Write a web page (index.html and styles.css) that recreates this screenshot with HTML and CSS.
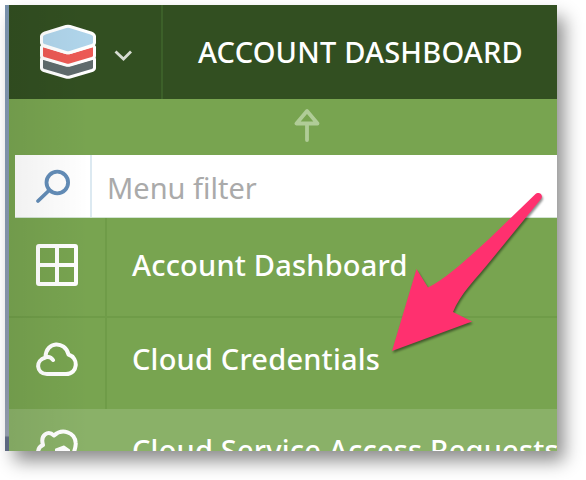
FILE: index.html
```
<!DOCTYPE html>
<html lang="en">
<head>
<meta charset="utf-8">
<title>Account Dashboard</title>
<link rel="stylesheet" href="styles.css">
</head>
<body>
<div class="window">
  <div class="app">
    <header class="header">
      <div class="brand">
        <svg class="logo" width="58" height="56" viewBox="0 0 58 56" stroke="#fff" stroke-width="3" stroke-linejoin="round">
          <path fill="#5f6b6c" d="M2.500 35Q3 33.500 5 34L27 40.500Q29 41 31 40.500L53 34Q55 33.500 55.500 35V44Q55.500 45.500 53 46.500L31 53Q29 53.600 27 53L5 46.500Q2.500 45.500 2.500 44Z"/>
          <path fill="#ec5a55" d="M2.500 23Q3 21.500 5 22L27 28.500Q29 29 31 28.500L53 22Q55 21.500 55.500 23V32Q55.500 33.500 53 34.500L31 41Q29 41.600 27 41L5 34.500Q2.500 33.500 2.500 32Z"/>
          <path fill="#b0d5eb" d="M27 2.500Q29 1.900 31 2.500L52 9Q55.500 10.500 55.500 12.500V18.500Q55.500 20.500 53 21.500L31 28.500Q29 29.100 27 28.500L5 21.500Q2.500 20.500 2.500 18.500V12.500Q2.500 10.500 6 9Z"/>
        </svg>
        <svg class="chevron" width="18" height="12" viewBox="0 0 18 12"><path d="M1.500 1.500 9.500 9 17 1.500" fill="none" stroke="#d6dcd2" stroke-width="2.800"/></svg>
      </div>
      <h1 class="title"><span>ACCOUNT DASHBOARD</span></h1>
    </header>
    <div class="scroll-up">
      <svg width="26" height="35" viewBox="0 0 26 35" fill="none" stroke="#b0cc97" stroke-width="3.800" stroke-linejoin="round" stroke-linecap="round"><path d="M13 3 2.500 15.500H23.500ZM13 16V32"/></svg>
    </div>
    <div class="filter">
      <div class="filter-icon">
        <svg width="36" height="36" viewBox="0 0 36 36" fill="none" stroke="#638db8" stroke-width="3.800" stroke-linecap="round"><circle cx="22.300" cy="13.500" r="10.800"/><path d="M14 21.500 3 32"/></svg>
      </div>
      <div class="filter-text">Menu filter</div>
    </div>
    <nav class="menu">
      <div class="item first">
        <div class="icon"><svg width="42" height="42" viewBox="0 0 42 42" fill="none" stroke="#fff" stroke-width="4"><rect x="2" y="2" width="38" height="38" rx="1"/><path d="M21 2V40M2 21H40"/></svg></div>
        <div class="label">Account Dashboard</div>
      </div>
      <div class="item second">
        <div class="icon"><svg width="42" height="34" viewBox="0 0 42 34" fill="none" stroke="#fff" stroke-width="4" stroke-linecap="round" stroke-linejoin="round"><path d="M17 18C15 15 12 14.500 9.500 15.500C-1 18 0 32 11 32H30C42 32 43 16 32.500 12.500C29-1.500 10-1 9.500 15"/></svg></div>
        <div class="label">Cloud Credentials</div>
      </div>
      <div class="item third">
        <div class="icon"><svg width="42" height="34" viewBox="0 0 42 34" fill="none" stroke="#fff" stroke-width="4" stroke-linecap="round" stroke-linejoin="round"><path d="M2 24C2 20 4 17 7 16C4 6 12 1 18 6.500C26-1 39 3 39.700 14C40 17 39 20 38 23"/><path d="M20 20.500 28 17.500 33 21V27H20Z" fill="#fff" stroke-width="2"/></svg></div>
        <div class="label">Cloud Service Access Requests</div>
      </div>
    </nav>
    <div class="edge-shade"></div>
  </div>
</div>
<svg class="pointer" width="160" height="170" viewBox="0 0 160 170"><path fill="#ff306f" d="M7 161 31.500 79 43 97.500C62 88 83 68 104 49L150 4.500C154 .5 159 5 156 9L107 69C91 89 75 104 68 122L87 131.500Z"/></svg>
</body>
</html>
```
FILE: styles.css
```
* { box-sizing: border-box; }
body {
  margin: 0;
  width: 586px;
  height: 480px;
  padding: 5px 0 0 5px;
  overflow: hidden;
  background: #fff;
  color: #fff;
  font-family: "Noto Sans", "Open Sans", sans-serif;
}
svg { display: block; flex: none; }
.window {
  width: 552px;
  height: 446px;
  padding-left: 4px;
  background: linear-gradient(#7890aa, #8792a5 85%, #9099a8 96.500%, #5d6880 97%);
  box-shadow: 8px 11px 17px -1px rgba(0, 0, 0, .45);
}
.app {
  position: relative;
  height: 446px;
  overflow: hidden;
  background: #78a450;
}
.header {
  display: flex;
  height: 94px;
  background: #324f21;
}
.brand {
  display: flex;
  align-items: center;
  width: 154px;
  padding-left: 30px;
  border-right: 2px solid #3c6029;
}
.chevron { margin: 8px 0 0 17px; }
.title {
  margin: 0;
  padding: 27px 0 0 35px;
  font-size: 29px;
  font-weight: 500;
  letter-spacing: .2px;
  line-height: 40px;
  white-space: nowrap;
}
.scroll-up {
  display: flex;
  justify-content: center;
  height: 56px;
  padding: 9px 0 0 48px;
}
.filter {
  display: flex;
  height: 63px;
  margin-left: 6px;
  background: #fff;
  border-bottom: 1px solid #d2e4d3;
}
.filter-icon {
  width: 77px;
  padding: 14px 0 0 20px;
  border-right: 2px solid #dce9f1;
}
.filter-text {
  padding: 13px 0 0 15px;
  color: #aaa;
  font-size: 29px;
  line-height: 40px;
}
.item { display: flex; }
.first { height: 100px; border-bottom: 2px solid #6f9c48; }
.second { height: 91px; }
.third { height: 60px; background: #8ab168; }
.icon {
  flex: none;
  width: 98px;
  padding: 26px 0 0 27px;
  border-right: 2px solid #6f9c48;
}
.second .icon { padding-top: 24px; }
.third .icon { padding-top: 20px; border-color: transparent; }
.label {
  padding: 27px 0 0 25px;
  font-size: 29px;
  font-weight: 540;
  letter-spacing: .2px;
  line-height: 40px;
  white-space: nowrap;
}
.second .label, .third .label { padding-top: 21px; }
.edge-shade {
  position: absolute;
  inset: 0 auto 0 0;
  width: 80px;
  background: linear-gradient(90deg, rgba(0, 0, 0, .06), rgba(0, 0, 0, 0));
}
.pointer {
  position: absolute;
  left: 385px;
  top: 190px;
  filter: drop-shadow(1px 2px 1px rgba(0, 0, 0, .45));
}
```
